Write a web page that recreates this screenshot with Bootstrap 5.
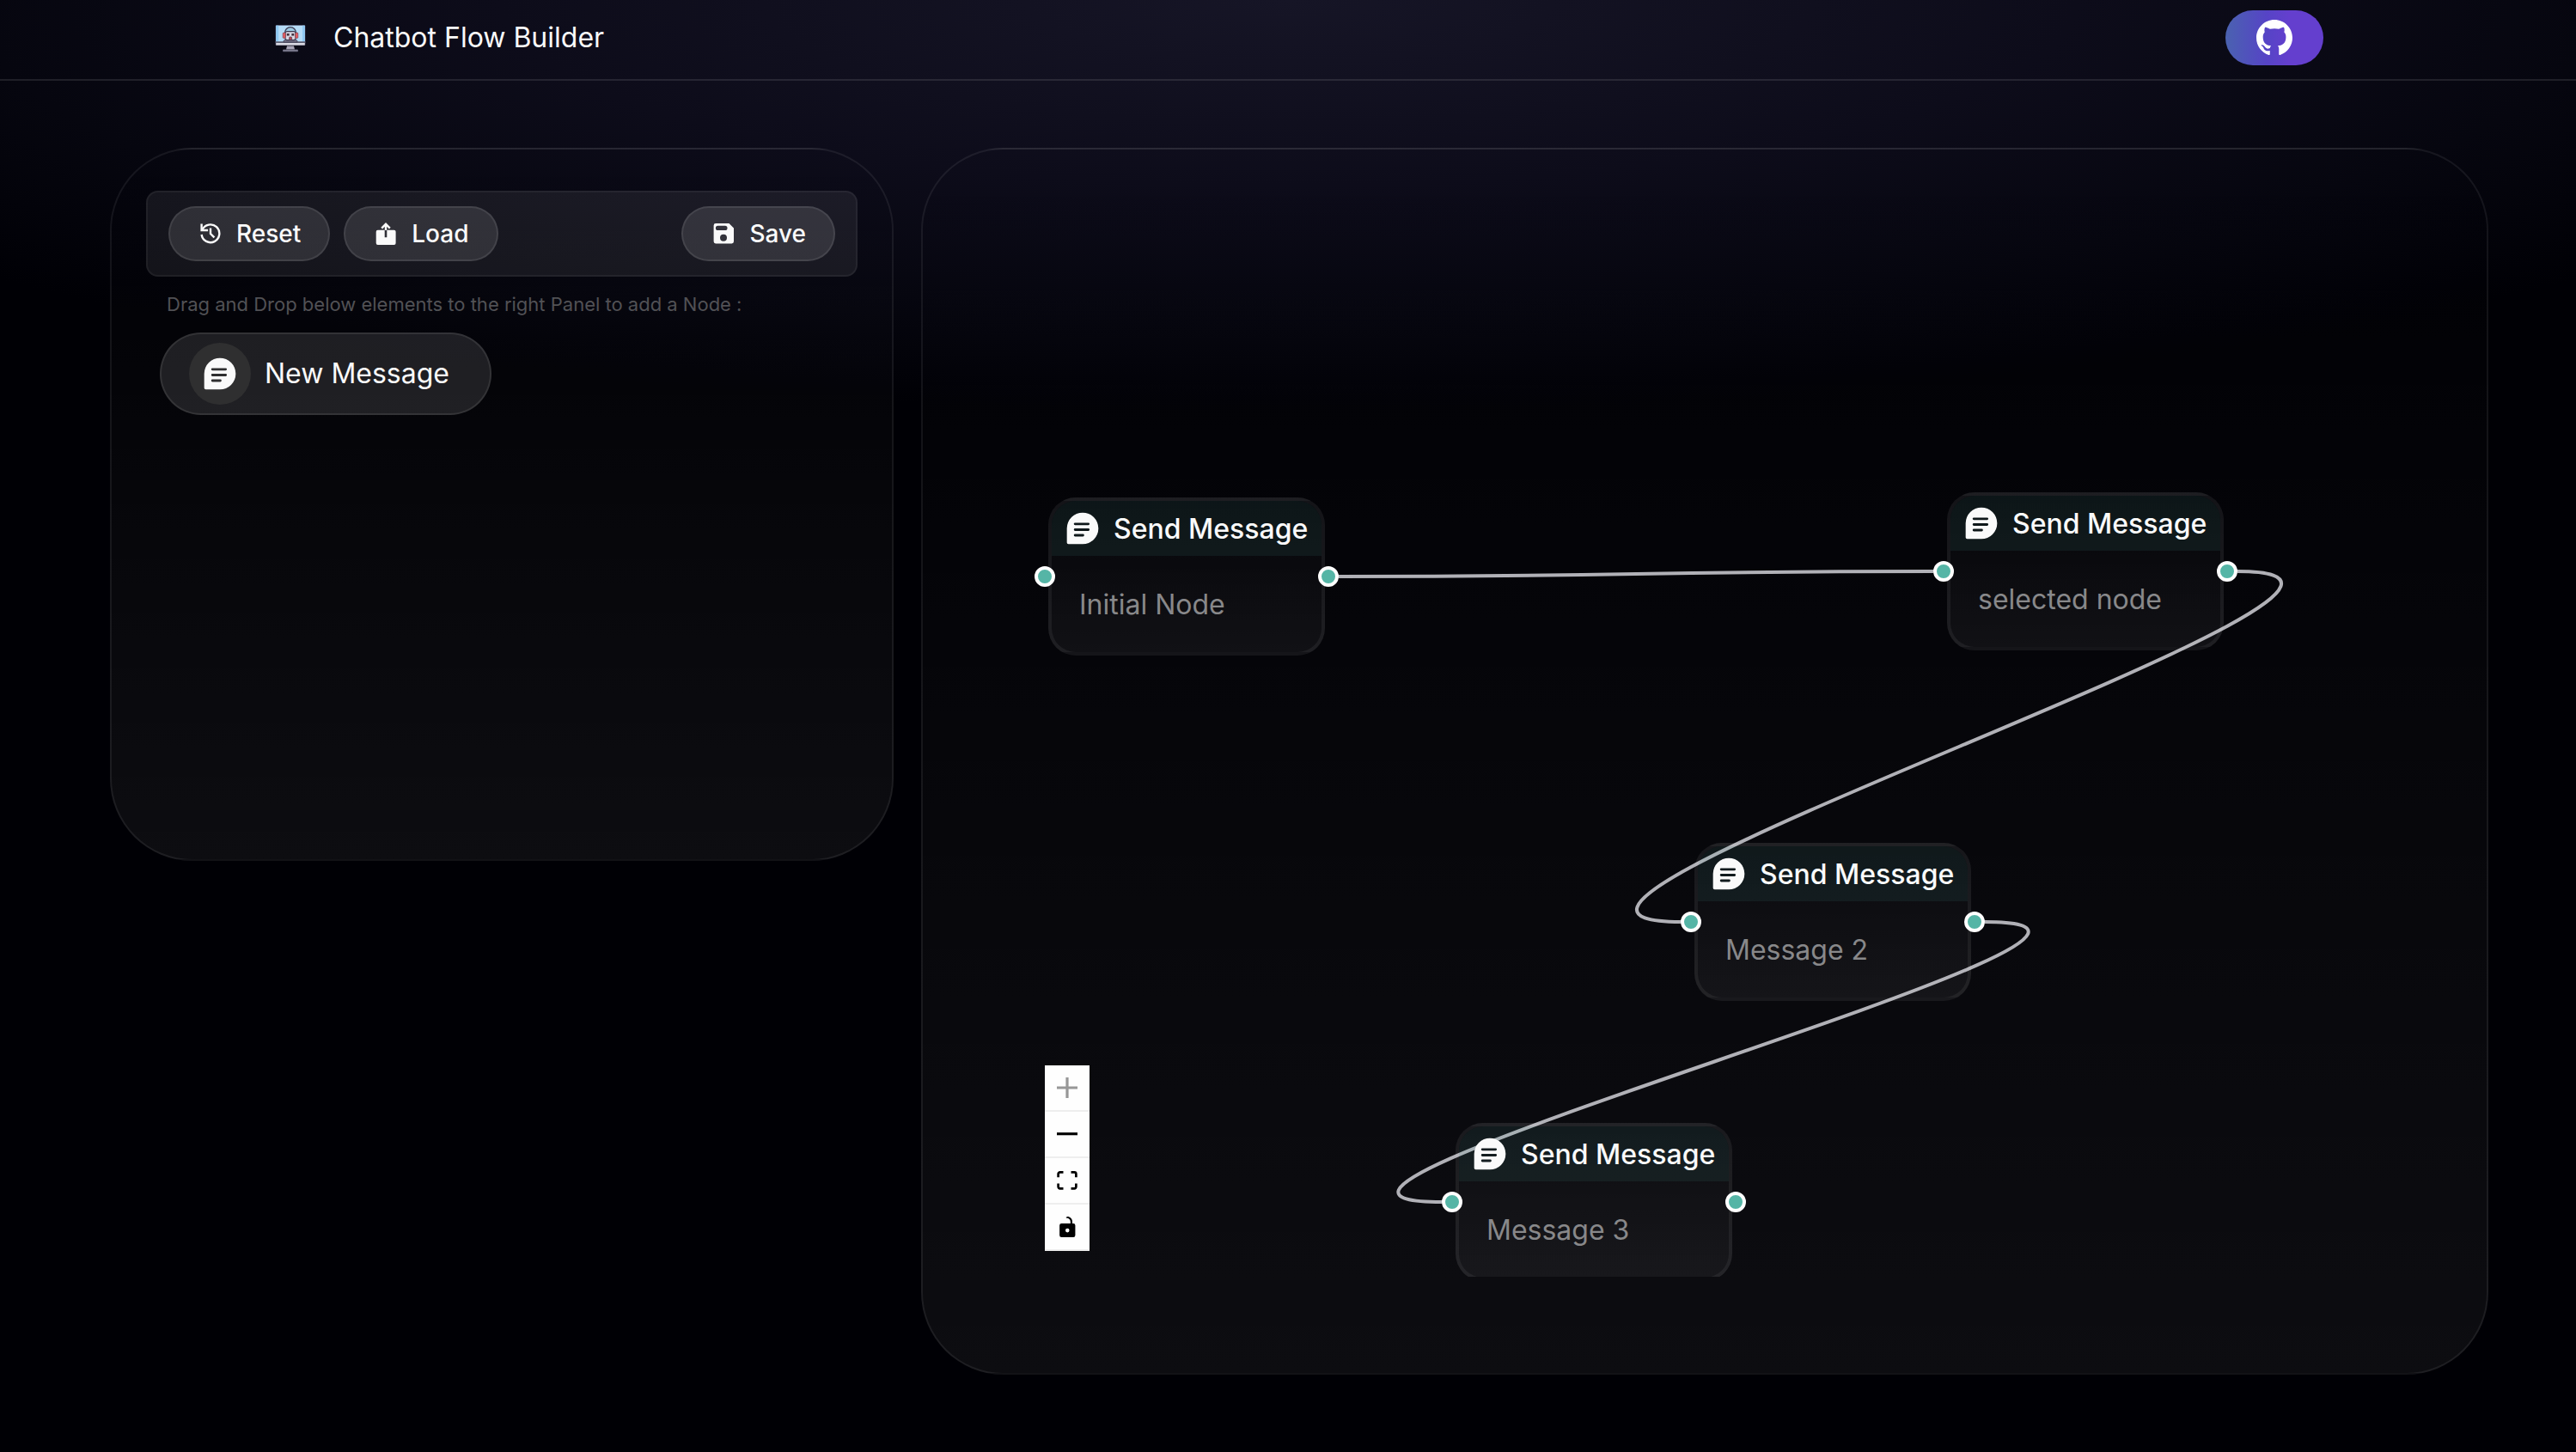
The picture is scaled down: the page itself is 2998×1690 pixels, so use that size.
<!DOCTYPE html>
<html lang="en" data-bs-theme="dark">
<head>
<meta charset="utf-8">
<meta name="viewport" content="width=device-width, initial-scale=1">
<title>Chatbot Flow Builder</title>
<link href="https://cdn.jsdelivr.net/npm/bootstrap@5.3.0/dist/css/bootstrap.min.css" rel="stylesheet">
<style>
  body {
    min-height: 100vh;
    font-family: Inter, "Liberation Sans", sans-serif;
    font-size: 32px;
    line-height: 48px;
    color: #fafafa;
    background: #000005 radial-gradient(ellipse 68% 480px at 50% 0, #161526 0%, #0d0c1a 45%, #06060f 75%, #000005 100%) no-repeat;
  }
  .topbar { height: 94px; padding: 0 294px 0 318px; border-bottom: 2px solid rgba(255,255,255,.1); }
  .brand-link { gap: 30px; color: inherit; text-decoration: none; margin-top: -4px; }
  .gh-link {
    width: 114px; height: 64px; border-radius: 32px; color: #fff; margin-top: -4px;
    background: linear-gradient(90deg, #4a62b0 0%, #5644c6 42%, #643fce 65%, #643fce 100%);
  }
  .workspace { grid-template-columns: 1fr 2fr; padding: 78px 102px 90px 128px; gap: 32px; }
  .glass {
    border: 2px solid rgba(255,255,255,.07);
    border-radius: 96px;
    background: linear-gradient(180deg, rgba(255,255,255,0) 0%, rgba(255,255,255,.05) 100%);
  }
  .side { height: 830px; padding: 48px 40px; }
  .stage { height: 1428px; padding: 112px; }
  .tools {
    height: 100px; padding: 0 24px; gap: 16px; border-radius: 14px;
    border: 2px solid rgba(255,255,255,.05); background: rgba(255,255,255,.07);
  }
  .pill {
    height: 64px; padding: 0 32px; gap: 17px; border-radius: 32px; font-size: 28px; line-height: 40px; font-weight: 500;
    color: #fafafa; background: rgba(255,255,255,.11); border: 2px solid rgba(255,255,255,.09);
  }
  .hint { margin: 16px 0 17px; padding: 0 24px; font-size: 22px; line-height: 32px; color: #515155; }
  .palette-item {
    height: 96px; margin-left: 16px; padding: 0 47px 0 32px; gap: 16px; border-radius: 48px; font-size: 32px;
    color: #fafafa; background: rgba(255,255,255,.11); border: 2px solid rgba(255,255,255,.09);
  }
  .disc { width: 72px; height: 72px; background: #2f2f30; }
  .board { height: 100%; }
  .node {
    width: 322px; height: 184px; border: 4px solid rgba(255,255,255,.06); border-radius: 32px;
    background: linear-gradient(180deg, rgba(255,255,255,.01), rgba(255,255,255,.05));
  }
  .node-head {
    height: 64px; padding: 0 14px; gap: 14px; font-weight: 500; white-space: nowrap; border-radius: 28px 28px 0 0;
    background: rgba(75,170,155,.1);
  }
  .node-head svg { flex: none; }
  .node-head span { padding-top: 2px; }
  .node-text { padding: 33px 32px 0; line-height: 48px; color: #88888a; }
  .port { width: 24px; height: 24px; top: 76px; border: 4px solid #fff; background: #55b5a6; }
  .port-in { left: -20px; }
  .port-out { right: -20px; }
  .n1 { left: 34px; top: 293px; }
  .n2 { left: 1080px; top: 287px; }
  .n3 { left: 786px; top: 695px; }
  .n4 { left: 508px; top: 1021px; }
  .zoom-box { left: 30px; bottom: 30px; width: 52px; }
  .zoom-box button { height: 54px; border: 0; border-bottom: 2px solid #eee; background: #fefefe; color: #000; padding: 0; }
  .zoom-box button:disabled svg { opacity: .4; }
</style>
</head>
<body>
<svg class="d-none" aria-hidden="true">
  <symbol id="msg" viewBox="0 0 24 24">
    <path fill="currentColor" fill-rule="evenodd" d="M12 2a10 10 0 0 1 0 20H3a1 1 0 0 1-1-1v-9A10 10 0 0 1 12 2zM7.2 8.4a.8.8 0 0 0 0 1.6h8.4a.8.8 0 0 0 0-1.6zM7.2 12a.8.8 0 0 0 0 1.6h8.4a.8.8 0 0 0 0-1.6zM7.2 15.6a.8.8 0 0 0 0 1.6h5a.8.8 0 0 0 0-1.6z"/>
  </symbol>
</svg>

<header class="topbar d-flex align-items-center justify-content-between">
  <a class="brand-link d-flex align-items-center" href="#">
    <svg width="40" height="40" viewBox="0 0 40 40" aria-hidden="true">
      <rect x="2.5" y="5" width="35" height="24" rx="1.5" fill="#3d3b52"/>
      <rect x="3.2" y="5.7" width="33.6" height="19.5" fill="#b5dcf7"/>
      <path d="M3.2 5.7h3v19.5h-3zM34 5.7h2.8v19.5H34z" fill="#8fc9f3"/>
      <rect x="3.2" y="26" width="33.6" height="2.6" fill="#d9d9e2"/>
      <path d="M2.5 25h35" stroke="#5d5b6e" stroke-width="1.4"/>
      <path d="M16 29.5h8l1 4h-10z" fill="#a9a6b8"/>
      <path d="M11.5 34h17v1.8h-17z" fill="#8b899c" stroke="#6b697d" stroke-width=".8"/>
      <path d="M12 25v-1.5l2-1.5h12l2 1.5V25z" fill="#777589" stroke="#3d3b52" stroke-width=".8"/>
      <path d="M13.6 14a6.4 6.4 0 0 1 12.8 0" fill="#9cc9e2" stroke="#3d3b52" stroke-width="1.3"/>
      <rect x="14" y="12.6" width="12" height="10" rx="2" fill="#d9d6e2" stroke="#3d3b52" stroke-width="1.1"/>
      <rect x="15.8" y="15" width="2.8" height="2.6" fill="#3d2d3a"/><rect x="21.4" y="15" width="2.8" height="2.6" fill="#3d2d3a"/>
      <rect x="18.6" y="19" width="3" height="3.4" rx="1" fill="#c2454e" stroke="#3d3b52" stroke-width=".7"/>
      <rect x="11.2" y="14" width="3" height="6.4" rx="1" fill="#ea5f64" stroke="#6b3040" stroke-width=".6"/>
      <rect x="25.8" y="14" width="3" height="6.4" rx="1" fill="#ea5f64" stroke="#6b3040" stroke-width=".6"/>
    </svg>
    <span>Chatbot Flow Builder</span>
  </a>
  <a class="gh-link d-flex align-items-center justify-content-center" href="#" aria-label="GitHub">
    <svg width="42" height="42" viewBox="0 0 16 16" fill="currentColor" aria-hidden="true"><path d="M8 0C3.58 0 0 3.58 0 8c0 3.54 2.29 6.53 5.47 7.59.4.07.55-.17.55-.38 0-.19-.01-.82-.01-1.49-2.01.37-2.53-.49-2.69-.94-.09-.23-.48-.94-.82-1.13-.28-.15-.68-.52-.01-.53.63-.01 1.08.58 1.23.82.72 1.21 1.87.87 2.33.66.07-.52.28-.87.51-1.07-1.78-.2-3.64-.89-3.64-3.95 0-.87.31-1.59.82-2.15-.08-.2-.36-1.02.08-2.12 0 0 .67-.21 2.2.82.64-.18 1.32-.27 2-.27.68 0 1.36.09 2 .27 1.53-1.04 2.2-.82 2.2-.82.44 1.1.16 1.92.08 2.12.51.56.82 1.27.82 2.15 0 3.07-1.87 3.75-3.65 3.95.29.25.54.73.54 1.48 0 1.07-.01 1.93-.01 2.2 0 .21.15.46.55.38A8.012 8.012 0 0 0 16 8c0-4.42-3.58-8-8-8z"/></svg>
  </a>
</header>

<main class="workspace d-grid align-items-start">
  <aside class="side glass">
    <div class="tools d-flex align-items-center">
      <button type="button" class="pill d-flex align-items-center">
        <svg width="28" height="28" viewBox="0 0 28 28" fill="none" stroke="currentColor" stroke-width="2.4" aria-hidden="true"><path d="M4.6 2.500v7.500h7.500"/><path d="M5.4 9.6a10.4 10.4 0 1 1-.8 5.4"/><path d="M15 7.6V14l4.400 4.400"/></svg>
        Reset
      </button>
      <button type="button" class="pill d-flex align-items-center">
        <svg width="28" height="28" viewBox="0 0 28 28" fill="none" stroke="currentColor" aria-hidden="true"><path fill="currentColor" stroke="none" d="M5.7 9.7h8v8.500h2.6V9.7h8.300a2 2 0 0 1 2 2V25a2 2 0 0 1-2 2H5.7a2 2 0 0 1-2-2V11.700a2 2 0 0 1 2-2z"/><path stroke-width="2.4" d="M15 10V3.500M10.200 7.600 15 2.800l4.800 4.800"/></svg>
        Load
      </button>
      <button type="button" class="pill d-flex align-items-center ms-auto">
        <svg width="28" height="28" viewBox="0 0 28 28" aria-hidden="true"><path fill="currentColor" fill-rule="evenodd" d="M6 2h15.500L27 7.500V23a2.400 2.400 0 0 1-2.400 2.400H6A2.400 2.400 0 0 1 3.600 23V4.400A2.400 2.400 0 0 1 6 2zM8.500 4.800a2.600 2.600 0 0 0 0 5.200h8.400a2.600 2.600 0 0 0 0-5.200zM15 14.700a4 4 0 1 0 0 8 4 4 0 0 0 0-8z"/></svg>
        Save
      </button>
    </div>
    <p class="hint">Drag and Drop below elements to the right Panel to add a Node :</p>
    <button type="button" class="palette-item d-flex align-items-center" draggable="true">
      <span class="disc rounded-circle d-flex align-items-center justify-content-center"><svg width="44" height="44" aria-hidden="true"><use href="#msg"/></svg></span>
      New Message
    </button>
  </aside>

  <section class="stage glass" aria-label="Flow canvas">
    <div class="board position-relative overflow-hidden">
      <svg class="position-absolute top-0 start-0 w-100 h-100" fill="none" stroke="#b1b1b7" stroke-width="4" aria-hidden="true">
        <path d="M372 385C718 385 718 379 1064 379"/>
        <path d="M1418 379C1736 379 452 787 770 787"/>
        <path d="M1124 787C1438 787 178 1113 492 1113"/>
      </svg>
      <article class="node n1 position-absolute">
        <div class="node-head d-flex align-items-center"><svg width="44" height="44" aria-hidden="true"><use href="#msg"/></svg><span>Send Message</span></div>
        <div class="node-text">Initial Node</div>
        <span class="port port-in position-absolute rounded-circle"></span><span class="port port-out position-absolute rounded-circle"></span>
      </article>
      <article class="node n2 position-absolute">
        <div class="node-head d-flex align-items-center"><svg width="44" height="44" aria-hidden="true"><use href="#msg"/></svg><span>Send Message</span></div>
        <div class="node-text">selected node</div>
        <span class="port port-in position-absolute rounded-circle"></span><span class="port port-out position-absolute rounded-circle"></span>
      </article>
      <article class="node n3 position-absolute">
        <div class="node-head d-flex align-items-center"><svg width="44" height="44" aria-hidden="true"><use href="#msg"/></svg><span>Send Message</span></div>
        <div class="node-text">Message 2</div>
        <span class="port port-in position-absolute rounded-circle"></span><span class="port port-out position-absolute rounded-circle"></span>
      </article>
      <article class="node n4 position-absolute">
        <div class="node-head d-flex align-items-center"><svg width="44" height="44" aria-hidden="true"><use href="#msg"/></svg><span>Send Message</span></div>
        <div class="node-text">Message 3</div>
        <span class="port port-in position-absolute rounded-circle"></span><span class="port port-out position-absolute rounded-circle"></span>
      </article>
      <div class="zoom-box position-absolute d-flex flex-column">
        <button type="button" class="d-flex align-items-center justify-content-center" aria-label="Zoom in" disabled><svg width="24" height="24" viewBox="0 0 32 32"><path d="M32 18.133H18.133V32h-4.266V18.133H0v-4.266h13.867V0h4.266v13.867H32z"/></svg></button>
        <button type="button" class="d-flex align-items-center justify-content-center" aria-label="Zoom out"><svg width="24" height="4" viewBox="0 0 32 5"><path d="M0 0h32v4.200H0z"/></svg></button>
        <button type="button" class="d-flex align-items-center justify-content-center" aria-label="Fit view"><svg width="24" height="22" viewBox="0 0 32 30"><path d="M3.692 4.630c0-.530.400-.938.939-.938h5.215V0H4.708C2.130 0 0 2.054 0 4.630v5.216h3.692V4.631zM27.354 0h-5.200v3.692h5.170c.530 0 .984.400.984.939v5.215H32V4.631A4.624 4.624 0 0 0 27.354 0zm.954 24.830c0 .532-.400.940-.939.940h-5.215v3.768h5.215c2.577 0 4.631-2.130 4.631-4.707v-5.139h-3.692v5.139zm-23.677.940c-.531 0-.939-.400-.939-.940v-5.138H0v5.139c0 2.577 2.130 4.707 4.708 4.707h5.138V25.770H4.631z"/></svg></button>
        <button type="button" class="d-flex align-items-center justify-content-center" aria-label="Toggle interactivity"><svg width="19" height="24" viewBox="0 0 25 32"><path d="M21.333 10.667H19.810V7.619C19.810 3.429 16.380 0 12.190 0c-4.114 1.828-1.370 2.133.305 2.438 1.676.305 4.420 2.590 4.420 5.181v3.048H3.047A3.056 3.056 0 0 0 0 13.714v15.238A3.056 3.056 0 0 0 3.048 32h18.285a3.056 3.056 0 0 0 3.048-3.048V13.714a3.056 3.056 0 0 0-3.048-3.047zM12.190 24.533a3.056 3.056 0 0 1-3.047-3.047 3.056 3.056 0 0 1 3.047-3.048 3.056 3.056 0 0 1 3.048 3.048 3.056 3.056 0 0 1-3.048 3.047z"/></svg></button>
      </div>
    </div>
  </section>
</main>
<script src="https://cdn.jsdelivr.net/npm/bootstrap@5.3.0/dist/js/bootstrap.bundle.min.js"></script>
</body>
</html>
